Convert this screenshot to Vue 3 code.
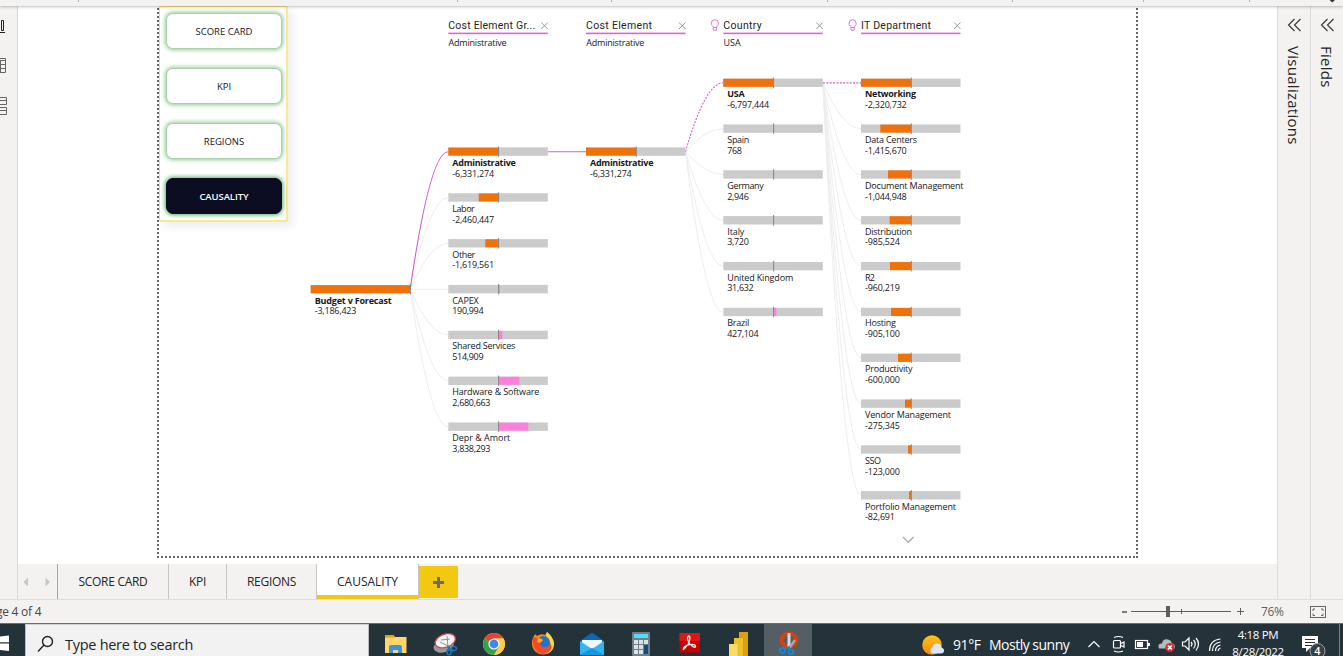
<script setup>
const round = Math.round
const W = 99.5
const PITCH = 45.84

function column(x, top, rows) {
  return rows.map(([name, width, value, from, to, active], i) => {
    const y = top + i * PITCH
    return {
      name, width, value, from, to, active, x, y,
      pink: !value.startsWith('-'),
      nameY: round(y + 18.7),
      valueY: round(y + 29.35),
      valueWidth: [...value].reduce((s, c) => s + (c === ',' ? 2 : c === '-' ? 3.6 : 4.88), 0)
    }
  })
}

const root = column(310.7, 285, [['Budget v Forecast', 77, '-3,186,423', 0, 99.5, true]])
const groups = column(448.3, 147.4, [
  ['Administrative', 63.5, '-6,331,274', 0, 50, true],
  ['Labor', 22.5, '-2,460,447', 30.5, 50],
  ['Other', 23, '-1,619,561', 37, 50],
  ['CAPEX', 26.5, '190,994', 50, 51.5],
  ['Shared Services', 63, '514,909', 50, 54],
  ['Hardware & Software', 87, '2,680,663', 50, 71],
  ['Depr & Amort', 58, '3,838,293', 50, 80]
])
const elements = column(586, 147.4, [['Administrative', 63.5, '-6,331,274', 0, 50, true]])
const countries = column(723.3, 78.55, [
  ['USA', 17.5, '-6,797,444', 0, 50, true],
  ['Spain', 22, '768', 50, 50],
  ['Germany', 36.5, '2,946', 50, 50],
  ['Italy', 17, '3,720', 50, 50],
  ['United Kingdom', 66, '31,632', 50, 50.3],
  ['Brazil', 22, '427,104', 50, 53]
])
const departments = column(861, 78.55, [
  ['Networking', 51, '-2,320,732', 0, 50, true],
  ['Data Centers', 52, '-1,415,670', 19.3, 50],
  ['Document Management', 98.5, '-1,044,948', 27, 50],
  ['Distribution', 47, '-985,524', 28.7, 50],
  ['R2', 10, '-960,219', 29, 50],
  ['Hosting', 31, '-905,100', 30, 50],
  ['Productivity', 47.5, '-600,000', 37, 50],
  ['Vendor Management', 86, '-275,345', 44, 50],
  ['SSO', 16, '-123,000', 47, 50],
  ['Portfolio Management', 91, '-82,691', 48, 50]
])
const nodes = [...root, ...groups, ...elements, ...countries, ...departments]

function connect(parent, children, dotted) {
  const x0 = parent.x + W
  const y0 = parent.y + 4.3
  return children.map(c => {
    const y1 = c.y + 4.3
    return { d: `M${x0} ${y0}Q${x0 + (c.x - x0) * 0.52} ${y1} ${c.x} ${y1}`, active: c.active, dotted }
  })
}
const links = [
  ...connect(root[0], groups, false),
  ...connect(groups[0], elements, false),
  ...connect(elements[0], countries, true),
  ...connect(countries[0], departments, true)
].sort((a, b) => (a.active ? 1 : 0) - (b.active ? 1 : 0))

const headers = [
  { x: 448.3, title: 'Cost Element Gr...', width: 87, sub: 'Administrative', subWidth: 58 },
  { x: 586, title: 'Cost Element', width: 66, sub: 'Administrative', subWidth: 58 },
  { x: 723.3, title: 'Country', width: 38.5, sub: 'USA', subWidth: 17, bulb: true },
  { x: 861, title: 'IT Department', width: 70, bulb: true }
]
const pages = ['SCORE CARD', 'KPI', 'REGIONS', 'CAUSALITY']
const ribbonMarks = [78, 457, 611, 827, 1012, 1143, 1249]
</script>

<template>
  <div class="app">
    <header class="ribbon">
      <svg width="1343" height="6">
        <rect v-for="m in ribbonMarks" :key="m" :x="m" y="0" width="1" height="2" fill="#b8b6b4" />
        <path d="M1329.5 0h5.500l-2.700 2.600z" fill="#333" />
      </svg>
    </header>

    <main class="workspace">
      <aside class="rail">
        <svg width="17" height="150" fill="none" stroke="#666" stroke-width="1">
          <path d="M1.500 14.500h2v10h-2zM0 26.500h5" stroke="#222" />
          <path d="M0 52.500h5.500v14H0M0 54.500h5M0 58.500h5M0 62.500h5M.5 54v12" />
          <path d="M0 91.500h6.500v7H0M0 94.500h6M0 101.500h6.500v7H0M0 104.500h6" />
        </svg>
      </aside>

      <div class="center">
        <section class="canvas">
          <div class="frame"></div>
          <nav class="page-nav">
            <button v-for="(p, i) in pages" :key="p" :class="{ current: i === 3 }">{{ p }}</button>
          </nav>
          <svg class="tree" width="860" height="550" viewBox="300 8 860 550">
            <g v-for="h in headers" :key="h.title">
              <text class="title" :x="h.x" y="29" :textLength="h.width">{{ h.title }}</text>
              <rect :x="h.x" y="32.600" :width="W" height="1.600" fill="#d968cd" />
              <path :d="`M${h.x + 93} 22.500l6.500 6.500m0 -6.500l-6.500 6.500`" stroke="#999" fill="none" />
              <text v-if="h.sub" class="label" :x="h.x + 0.3" y="46" :textLength="h.subWidth">{{ h.sub }}</text>
              <path v-if="h.bulb" :d="`M${h.x - 10} 27.500c0 -1.500 -2 -2 -2 -4.200a3.600 3.600 0 0 1 7.200 0c0 2.200 -2 2.700 -2 4.200zm0 0v2.700h3.200v-2.700`" fill="none" stroke="#d968cd" stroke-width=".9" />
            </g>
            <path v-for="(l, i) in links" :key="i" :d="l.d" fill="none" :stroke="l.active ? '#d35fc5' : '#eeeeee'"
              :stroke-width="l.active ? 1.1 : 1" :stroke-dasharray="l.active && l.dotted ? '2 1.33' : null" />
            <g v-for="(n, i) in nodes" :key="`n${i}`">
              <rect :x="n.x" :y="n.y" :width="W" height="8.400" fill="#cbcbcb" />
              <rect :x="n.x + n.from" :y="n.y + 0.2" :width="n.to - n.from" height="8" :fill="n.pink ? '#ff7fdd' : '#f07009'" />
              <rect :x="n.x + (i === 0 ? 99.1 : 49.8)" :y="n.y - 1" width="1" height="10.500" fill="#858585" />
              <text class="label" :class="{ strong: n.active }" :x="n.x + 4" :y="n.nameY" :textLength="n.width">{{ n.name }}</text>
              <text class="label" :x="n.x + 4" :y="n.valueY" :textLength="n.valueWidth">{{ n.value }}</text>
            </g>
            <path d="M903 537l5.300 5.300 5.300-5.300" fill="none" stroke="#aaa" stroke-width="1.300" />
          </svg>
        </section>

        <footer class="tabs">
          <div class="arrows">
            <svg width="39" height="35"><path d="M10 13.500v9l-4.500-4.500zM27.500 13.500v9l4.500-4.500z" fill="#c6c6c6" /></svg>
          </div>
          <div v-for="(p, i) in pages" :key="p" class="tab" :class="[`tab-${i}`, { on: i === 3 }]">
            <span>{{ p }}</span>
          </div>
          <div class="add"><svg width="39" height="32"><path d="M14 16.500h11M19.500 11v11" stroke="#6d6a67" stroke-width="3" /></svg></div>
        </footer>
      </div>

      <aside v-for="p in ['Visualizations', 'Fields']" :key="p" class="pane">
        <svg width="32" height="14" fill="none" stroke="#333" stroke-width="1.100"><path d="M16.500 1l-6 6 6 6M22.500 1l-6 6 6 6" /></svg>
        <span>{{ p }}</span>
      </aside>
    </main>

    <div class="status">
      <span class="page-count">ge 4 of 4</span>
      <svg class="zoom-bar" width="126" height="23">
        <path d="M1 12h5" stroke="#605e5c" stroke-width="1.600" />
        <path d="M10 11.500h100M60.500 9v5M116 11.500h7M119.500 8v7" stroke="#605e5c" fill="none" />
        <rect x="45" y="6" width="4" height="11" fill="#605e5c" />
      </svg>
      <span class="percent">76%</span>
      <svg width="17" height="13" fill="none"><rect x=".5" y=".5" width="15" height="11" stroke="#68646a" /><path d="M3 5V3h2M11 3h2v2M13 7.500v2h-2M5 9.500H3v-2" stroke="#68646a" /></svg>
    </div>

    <div class="taskbar">
      <div class="start"><svg width="25" height="33"><path d="M0 13.500l9-1v6.700H0zM0 20.500h9v7.500l-9-1z" fill="#fff" /></svg></div>
      <div class="search">
        <svg width="18" height="18" fill="none" stroke="#222" stroke-width="1.400"><circle cx="10.500" cy="6.500" r="5" /><path d="M7 10L1 16.500" /></svg>
        <span>Type here to search</span>
      </div>
      <div class="shortcuts">
        <svg width="443" height="33" viewBox="369 623 443 33">
          <path d="M385 635h8l2 2h11.500v16H385z" fill="#ffd667" /><path d="M385 635h8.500l1.500 2.500H385z" fill="#e0a010" />
          <path d="M389 653v-6q0-2 2-2h9q2 0 2 2v6h-4v-3h-5v3z" fill="#3a95dc" />

          <g transform="rotate(-20 445 643)"><ellipse cx="443" cy="645" rx="10.500" ry="6.500" fill="#999" /><ellipse cx="446" cy="641" rx="10.500" ry="6.500" fill="#f5f5f5" stroke="#d14747" stroke-width="1.300" /></g>
          <path d="M440 642l10 5M447 636l1 11M441 640l9-1" stroke="#89939a" fill="none" /><path d="M448 646l5 6M448 646l1 5" stroke="#1c76b5" stroke-width="1.500" /><g fill="none" stroke="#1c76b5" stroke-width="1.500"><ellipse cx="449" cy="652" rx="2" ry="2.800" /><ellipse cx="454" cy="648.500" rx="2.500" ry="2" /></g>

          <circle cx="494" cy="644" r="11" fill="#ffcd43" /><path d="M494 644L484.500 638.500A11 11 0 0 1 503.500 638.500H494z" fill="#e84335" /><path d="M494 644l-9.500-5.500A11 11 0 0 0 494 655l5-8z" fill="#34a350" /><path d="M494 638.500h9.500A11 11 0 0 1 494 655l5-8z" fill="#ffcd43" /><circle cx="494" cy="644" r="5.600" fill="#fff" /><circle cx="494" cy="644" r="4.400" fill="#4285f4" />

          <path d="M533 638l2-4 2 2q4-3 8-1l2-3q6 5 7 11a11 11 0 1 1-22 1q0-4 1-6z" fill="#ff8a16" /><path d="M547 632q6 5 7 11 0 8-7 11 5-9 1-14-3-3-1-8z" fill="#ffd83b" /><circle cx="543.500" cy="642.500" r="6.500" fill="#1975ce" /><path d="M533 638q3-2 6 1l4 1-3 3q1 5 6 4 4-1 4-5 4 8-3 11-8 3-12-4-3-5-2-11z" fill="#f24b27" /><path d="M538 638q3 0 5 2l-3 3-3-1z" fill="#ffae1a" />

          <path d="M580 641l12-8.500 12 8.500v14h-24z" fill="#0769b8" /><path d="M582 640h20v9h-20z" fill="#f4f6f8" /><path d="M580 641l12 8 12-8v14h-24z" fill="#31b6f3" /><path d="M580 655l12-7 12 7z" fill="#1497df" />

          <rect x="632" y="632" width="18" height="24" rx="1" fill="#717f88" /><rect x="634" y="634" width="14" height="4" fill="#52dcfa" /><g fill="#dce2e5"><rect v-for="k in 8" :key="k" :x="634 + ((k - 1) % 3) * 5" :y="640 + Math.floor((k - 1) / 3) * 5" width="4" height="4" /></g><rect x="644" y="645" width="4" height="9" fill="#174982" />

          <rect x="679.500" y="633" width="20.500" height="19.500" fill="#c80000" /><rect x="679.500" y="633" width="20.500" height="8" fill="#df1414" /><path d="M688.500 636c2-1 2 5-1 9s-5 6-4 3 11-5 12-2-5 0-7-4-1-5 0-6z" fill="none" stroke="#fff" stroke-width="1.200" />

          <path d="M739 632h9v24h-9z" fill="#dca00a" /><path d="M734 638h9v18h-9z" fill="#efbf29" /><path d="M729 644h8.500v12H729z" fill="#f9db68" />

          <rect x="764" y="624" width="48" height="32" fill="#535f65" /><ellipse cx="789" cy="640" rx="7.500" ry="6.500" fill="none" stroke="#d04410" stroke-width="4" /><path d="M787.500 633h3v15l-3-1z" fill="#d9dcde" /><path d="M790 647l5-7" stroke="#aaa" stroke-width="2.500" /><g fill="none" stroke="#1488d8" stroke-width="1.800"><circle cx="782.500" cy="650.500" r="2.500" /><circle cx="791" cy="652" r="2.300" /><path d="M785 649l4-2 1 3" /></g>
        </svg>
      </div>
      <div class="tray">
        <svg class="sun" width="24" height="24"><defs><linearGradient id="sun" x2="0" y2="1"><stop stop-color="#ffc313" /><stop offset="1" stop-color="#f48614" /></linearGradient></defs><circle cx="10" cy="11" r="9.800" fill="url(#sun)" /><path d="M10 19.500a3.500 3.500 0 0 1 0-6q1-4 5-4t4.500 4q3 1 2.500 4-.5 2-3 2z" fill="#dce8fa" /></svg>
        <span class="temp">91°F</span>
        <span class="weather">Mostly sunny</span>
        <svg class="indicators" width="136" height="33" viewBox="1086 623 136 33" fill="none" stroke="#fff" stroke-width="1.200">
          <path d="M1088.500 647l5.500-5.500 5.500 5.500" />
          <rect x="1113.500" y="640.500" width="7" height="7.500" rx="1" /><path d="M1121 643.500l3-1.500v5l-3-1.500M1114 637.500q4.500-2 9 0M1114 651q4.500 2 9 0" />
          <rect x="1135.500" y="640.500" width="12" height="8" /><rect x="1137" y="642" width="6" height="5" fill="#fff" stroke="none" /><path d="M1149 643v3" stroke-width="2" />
          <path d="M1159 648.500q-2-5 3-5 1-5 6-4 4 1 3.500 4 4 0 3 5z" fill="#b6bbbe" stroke="none" /><circle cx="1169.800" cy="647.500" r="4.500" fill="#d82d32" stroke="none" /><path d="M1167.800 645.500l4 4m0-4l-4 4" stroke-width="1.500" />
          <path d="M1182.500 642h2.500l4-4v12l-4-4h-2.500zM1191 642q2 2 0 4.500M1193.500 640q3.500 4 0 8.500M1196 638q5 6 0 12.500" />
          <path d="M1210 651q0-11 11-12M1213 651q0-8 8-9M1216 651q0-5 5-6M1218.500 651q0-2 2.500-3" transform="translate(-.5 0)" />
        </svg>
        <div class="clock"><span>4:18 PM</span><span>8/28/2022</span></div>
        <svg class="notice" width="42" height="33" viewBox="1301 623 42 33">
          <path d="M1302 636h16v12h-8l-4 4v-4h-4z" fill="#fff" /><path d="M1305 639.500h10M1305 642.500h10M1305 645.500h7" stroke="#25323a" />
          <circle cx="1317.500" cy="651" r="7.500" fill="#354047" stroke="#9ba1a4" /><text x="1314.300" y="655" fill="#fff" font-size="11" font-weight="600">4</text>
          <path d="M1339.500 624v32" stroke="#7b8488" />
        </svg>
      </div>
    </div>
  </div>
</template>

<style>
body { margin: 0; overflow: hidden; }
</style>

<style scoped>
.app { width: 1343px; height: 656px; overflow: hidden; display: flex; flex-direction: column; background: #f3f2f1; font-family: "Open Sans", "Noto Sans", sans-serif; color: #252423; }
svg { display: block; flex: none; }
.ribbon { height: 6px; flex: none; position: relative; z-index: 2; box-shadow: 0 1px 3px rgba(0, 0, 0, .25); background: #f3f2f1; }
.workspace { height: 593px; flex: none; display: flex; border-bottom: 1px solid #dedddc; }
.rail { width: 17px; border-right: 1px solid #dad9d8; }
.center { width: 1259px; display: flex; flex-direction: column; }
.canvas { height: 558px; background: #fff; position: relative; }
.frame {
  position: absolute; left: 139px; top: 2px; width: 981px; height: 550px;
  background:
    repeating-linear-gradient(#666 0 2px, transparent 2px 4px) left / 2px 100% no-repeat,
    repeating-linear-gradient(#666 0 2px, transparent 2px 4px) right / 2px 100% no-repeat,
    repeating-linear-gradient(90deg, #666 0 2px, transparent 2px 4px) bottom / 100% 2px no-repeat;
}
.page-nav { position: absolute; left: 141px; top: 0; width: 129px; height: 216px; box-sizing: border-box; border: 1px solid #f7df72; border-right: 2px solid #fbe895; border-bottom: 2px solid #fbe895; border-radius: 2px; background: #fff; padding: 6px 5px 0 6px; display: flex; flex-direction: column; gap: 19px; box-shadow: 5px 5px 8px rgba(0, 0, 0, .07); }
.page-nav button { box-sizing: border-box; width: 116px; height: 36px; flex: none; padding: 1px 0 0; border: 1px solid #a9cfab; border-radius: 7px; background: #fff; box-shadow: 0 0 4px 1px #8fca93; font: 9.5px "Open Sans", sans-serif; letter-spacing: 0; color: #15152a; }
.page-nav .current { background: #0c0c23; color: #fff; border-color: #0c0c23; box-shadow: 0 0 4px 1px #57a95c; font-weight: 600; letter-spacing: -.08px; }
.tree { position: absolute; left: 282px; top: 2px; }
.label { font: 9px "Open Sans", sans-serif; fill: #17171c; }
.strong { font-weight: 700; }
.title { font: 10.5px Roboto, sans-serif; fill: #252423; }
.tabs { height: 35px; display: flex; font-size: 12px; }
.arrows { width: 39px; border-right: 1px solid #a6a4a2; }
.tab { box-sizing: border-box; border-right: 1px solid #c8c6c4; display: flex; align-items: center; justify-content: center; letter-spacing: -.3px; }
.tab-0 { width: 111px; }
.tab-1 { width: 58px; }
.tab-2 { width: 90px; }
.tab-3 { width: 102px; }
.tab.on { background: #fff; box-shadow: inset 0 -4px #f2c811; font-weight: 500; letter-spacing: 0; }
.add { width: 39px; height: 32px; background: #f2c811; margin-top: 2px; }
.pane { width: 32px; border-left: 1px solid #dddcdb; padding-top: 12px; display: flex; flex-direction: column; gap: 14px; }
.pane span { writing-mode: vertical-rl; width: 20px; font-size: 15px; line-height: 20px; margin-left: 6px; letter-spacing: .28px; }
.status { height: 23px; flex: none; display: flex; align-items: center; font-size: 12px; color: #484644; }
.page-count { width: 1121px; letter-spacing: -.25px; text-indent: -4px; }
.percent { width: 50px; padding-left: 14px; box-sizing: border-box; letter-spacing: -.3px; color: #605e5c; }
.zoom-bar { flex: none; }
.status > svg:last-child { margin-left: 13px; margin-top: 2px; }
.taskbar { height: 33px; flex: none; display: flex; background: #24323a; border-top: 1px solid #3b8099; box-sizing: border-box; overflow: hidden; }
.start { width: 25px; margin-top: -1px; }
.search { box-sizing: border-box; width: 344px; height: 40px; background: #f2f2f2; border: 1px solid #b8bbbd; border-top-color: #d1d1d1; display: flex; padding: 10px 0 0 11px; gap: 10px; font-size: 14.5px; line-height: 20px; letter-spacing: -.28px; }
.shortcuts { width: 443px; margin-top: -1px; }
.tray { flex: 1; display: flex; margin-left: 110px; color: #fff; }
.sun { margin-top: 10px; }
.temp { margin: 11px 0 0 7px; width: 36px; font-size: 14px; line-height: 20px; letter-spacing: -.4px; }
.weather { margin-top: 11px; width: 97px; font-size: 14px; line-height: 20px; letter-spacing: -.5px; white-space: nowrap; }
.indicators { margin-top: -1px; }
.clock { width: 72px; display: flex; flex-direction: column; align-items: center; font-size: 11.5px; line-height: 17px; padding-top: 2px; letter-spacing: -.35px; }
.notice { margin: -1px 0 0 auto; }
</style>
